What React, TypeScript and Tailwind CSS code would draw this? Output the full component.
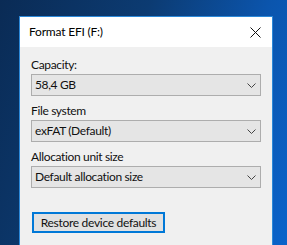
import React from "react";

const font = { fontFamily: "Lato, 'Liberation Sans', sans-serif" };

function Chevron() {
	return (
		<svg width="9" height="5" viewBox="0 0 9 5" className="shrink-0">
			<polyline points="0.5,0.5 4.5,4.5 8.5,0.5" fill="none" stroke="#444" strokeWidth="1" />
		</svg>
	);
}

function Field(props: { label: string; value: string }) {
	return (
		<div className="flex flex-col">
			<div className="h-[16px] leading-[16px] text-[12px] tracking-[-0.35px] text-[#111] mb-[1px]">{props.label}</div>
			<div className="h-[22px] w-[230px] bg-[#e5e5e5] border border-[#adadad] flex items-center justify-between pl-[3px] pr-[4px]">
				<span className="text-[12px] tracking-[-0.35px] text-[#111] leading-none">{props.value}</span>
				<Chevron />
			</div>
		</div>
	);
}

export default function App() {
	return (
		<div
			className="w-[287px] h-[245px] overflow-hidden bg-[linear-gradient(110deg,#0a2b55_0%,#0c3b72_40%,#0b55ad_72%,#0a63ca_100%)] pl-[19px] pt-[16px]"
			style={font}
		>
			<div className="w-[254px] h-[260px] border border-[#2b88d8] bg-[#f0f0f0] flex flex-col">
				<div className="h-[30px] bg-white flex items-center justify-between pl-[9px] pr-[11px]">
					<span className="text-[12px] tracking-[-0.2px] text-black">Format EFI (F:)</span>
					<svg width="11" height="11" viewBox="0 0 11 11">
						<path d="M0.5 0.5 L10.5 10.5 M10.5 0.5 L0.5 10.5" stroke="#111" strokeWidth="1" />
					</svg>
				</div>
				<div className="flex flex-col pl-[11px] pt-[10px]">
					<div className="flex flex-col gap-[7px]">
						<Field label="Capacity:" value="58,4 GB" />
						<Field label="File system" value="exFAT (Default)" />
						<Field label="Allocation unit size" value="Default allocation size" />
					</div>
					<div className="mt-[24px]">
						<button className="h-[21px] w-[133px] ml-[1px] border-2 border-[#0078d7] bg-[#e1e1e1] text-[12px] tracking-[-0.3px] text-[#111] leading-none flex items-center justify-center">
							Restore device defaults
						</button>
					</div>
				</div>
			</div>
		</div>
	);
}
